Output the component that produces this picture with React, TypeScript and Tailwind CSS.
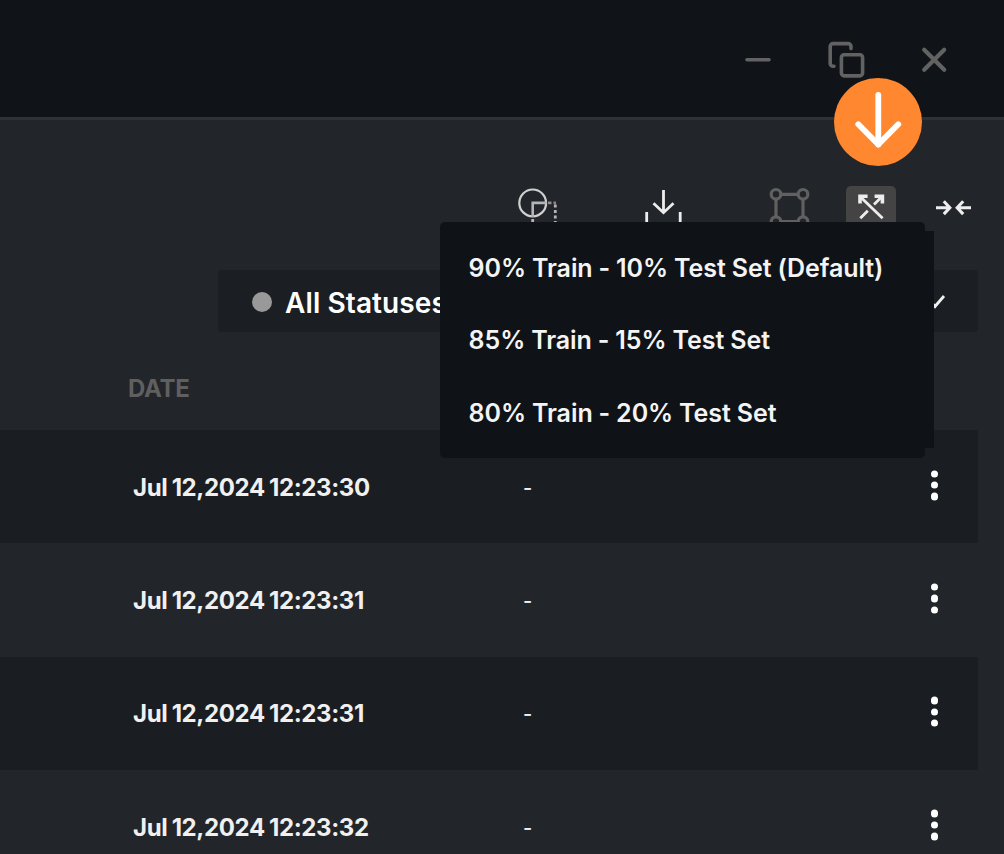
const splits = [
  '90% Train - 10% Test Set (Default)',
  '85% Train - 15% Test Set',
  '80% Train - 20% Test Set',
];

const rows = [
  { id: 1, date: 'Jul 12,2024 12:23:30' },
  { id: 2, date: 'Jul 12,2024 12:23:31' },
  { id: 3, date: 'Jul 12,2024 12:23:31' },
  { id: 4, date: 'Jul 12,2024 12:23:32' },
];

function WindowControls() {
  return (
    <div className="flex justify-end gap-11 pr-12 text-[#626262]">
      <svg width="44" height="44" fill="none" stroke="currentColor" strokeWidth="3.6" strokeLinecap="round">
        <path d="M11 21.7h22" />
      </svg>
      <svg width="44" height="44" fill="none" stroke="currentColor" strokeWidth="3.6" strokeLinecap="round">
        <path d="M10 28.2H9a2.8 2.8 0 0 1-2.8-2.8V8.4A2.8 2.8 0 0 1 9 5.6h15.2a2.8 2.8 0 0 1 2.8 2.8v2.2" />
        <rect x="17.4" y="16.7" width="21.2" height="21.2" rx="2.8" />
      </svg>
      <svg width="44" height="44" fill="none" stroke="currentColor" strokeWidth="4.2" strokeLinecap="round">
        <path d="m12.2 11.7 20 20m0-20-20 20" />
      </svg>
    </div>
  );
}

function Toolbar() {
  return (
    <div className="flex h-[50px] justify-end pr-[29px] text-[#ededed]">
      <svg className="mr-[83px]" width="44" height="50" fill="none" stroke="currentColor" strokeWidth="2.2">
        <circle cx="17.7" cy="16.9" r="13.4" stroke="#d0d0d0" />
        <path d="M17.7 31V16.9h14" stroke="#b4b4b4" strokeWidth="2.6" />
        <path d="M33 16.9h8" stroke="#8c8c8c" strokeWidth="2.6" strokeDasharray="3.5 2" />
        <path d="M40.3 18.5V40M17.7 33v8" stroke="#b4b4b4" strokeWidth="2.8" strokeDasharray="3 2.5" />
      </svg>
      <svg className="mr-[82px]" width="44" height="50" fill="none" stroke="currentColor" strokeWidth="2.8">
        <path d="M21.5 4v22.5M11.5 17.3l10 9.4 10-9.4" />
        <path d="M4.7 26v14h33.5V26" />
      </svg>
      <svg className="mr-[34px]" width="44" height="50" fill="none" stroke="#606060" strokeWidth="3.2">
        <circle cx="8" cy="8.3" r="4.8" />
        <circle cx="35" cy="8.3" r="4.8" />
        <circle cx="8" cy="35.6" r="4.8" />
        <circle cx="35" cy="35.6" r="4.8" />
        <path d="M13 8.3h17M13 35.6h17M8 13v18M35 13v18" />
      </svg>
      <button className="mr-[35px] h-[50px] w-[50px] rounded-[5px] bg-[#444444]">
        <svg width="50" height="50" fill="none" stroke="currentColor" strokeWidth="2.8">
          <path d="m14 10.5 22.6 21.8M14.3 32.3l7.5-7.5M28 18.6l8-8" />
          <path d="M14 17.5v-7.2h7.6M28.6 10.3h7.8v7.2" strokeWidth="3.6" />
        </svg>
      </button>
      <svg width="44" height="50" fill="none" stroke="currentColor" strokeWidth="3.1">
        <path d="M5 21.7h13M12.8 15.3l6 6.4-6 6.4" />
        <path d="M40 21.7H27M32.2 15.3l-6 6.4 6 6.4" />
      </svg>
    </div>
  );
}

function SplitMenu() {
  return (
    <div className="absolute left-[440px] top-[222px] h-[236px] w-[485px] rounded-[5px] bg-[#0f1317]">
      <div className="absolute left-0 top-[9px] h-[217px] w-[494px] bg-[#0f1317]" />
      <ul className="relative pl-[28.5px] pt-[10px]">
        {splits.map((label) => (
          <li
            key={label}
            className="flex h-[72.5px] items-center whitespace-nowrap text-[25px] font-semibold tracking-[-0.05px] text-[#f4f4f4] [word-spacing:-0.3px]"
          >
            {label}
          </li>
        ))}
      </ul>
    </div>
  );
}

export default function App() {
  return (
    <div
      className="relative h-[854px] w-[1004px] overflow-hidden bg-[#222529]"
      style={{ fontFamily: 'Inter, "Liberation Sans", sans-serif', fontFeatureSettings: '"calt" 0' }}
    >
      <header className="h-[120px] border-b-[3px] border-[#2b3337] bg-[#101317] pt-[38px]">
        <WindowControls />
      </header>

      <div className="pt-[66px]">
        <Toolbar />
      </div>

      {/* Status filter */}
      <div className="ml-[218px] mt-[34px] flex h-[62px] w-[760px] items-center rounded bg-[#1b1e22] pl-[34px] pr-8">
        <span className="mt-0.5 h-5 w-5 rounded-full bg-[#999999]" />
        <span className="ml-[13px] mt-1 whitespace-nowrap text-[28px] font-semibold tracking-[0.1px] text-white">
          All Statuses
        </span>
        <svg className="ml-auto" width="22" height="22" fill="none" stroke="#f0f0f0" strokeWidth="2.8">
          <path d="m2 6 9 10.5 9-10.5" />
        </svg>
      </div>

      <div className="flex h-[98px] items-center pl-32 pt-4 text-2xl font-bold tracking-[-0.3px] text-[#5f5f5f]">
        DATE
      </div>

      <div className="w-[978px]">
        {rows.map((row) => (
          <div key={row.id} className="flex h-[113.3px] items-center pl-[133px] text-[#f0f0f0] odd:bg-[#1a1d21]">
            <span className="mt-0.5 w-[390px] whitespace-nowrap text-2xl font-bold tracking-[-0.38px] [word-spacing:-1px]">
              {row.date}
            </span>
            <span className="mt-0.5 text-xl font-medium">-</span>
            <div className="ml-auto mr-[40px] flex -translate-y-[1.5px] flex-col gap-1">
              <span className="h-[7.4px] w-[7.4px] rounded-full bg-white" />
              <span className="h-[7.4px] w-[7.4px] rounded-full bg-white" />
              <span className="h-[7.4px] w-[7.4px] rounded-full bg-white" />
            </div>
          </div>
        ))}
      </div>

      <SplitMenu />

      {/* Pointer badge */}
      <div className="absolute left-[834px] top-[78px] h-[88px] w-[88px] rounded-full bg-[#ff872f]">
        <svg width="88" height="88" fill="none" stroke="white" strokeWidth="5.8" strokeLinecap="round" strokeLinejoin="round">
          <path d="M44.3 17v49.5" />
          <path d="m24.3 46.3 20 20.2 20-20.2" />
        </svg>
      </div>
    </div>
  );
}
